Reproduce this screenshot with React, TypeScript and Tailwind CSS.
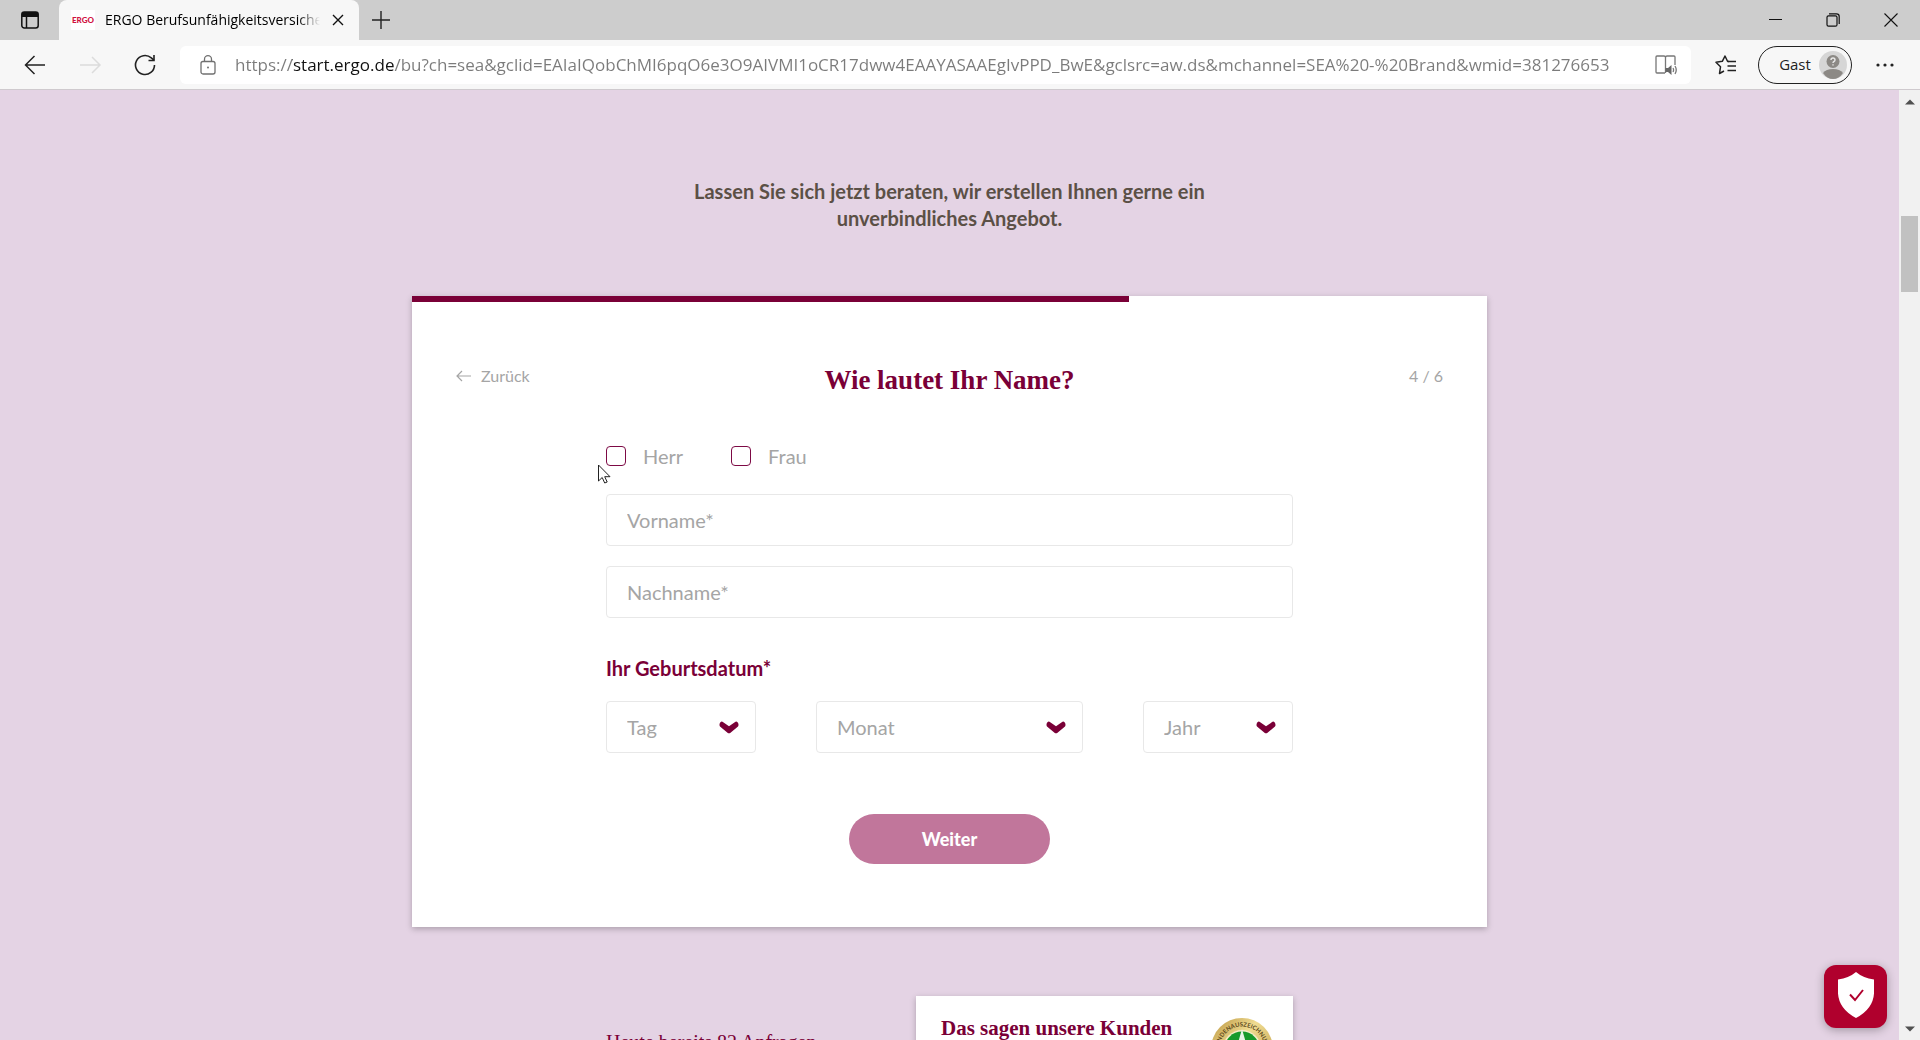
import { useState } from "react"
import type { ReactNode } from "react"

const URL =
  "https://start.ergo.de/bu?ch=sea&gclid=EAIaIQobChMI6pqO6e3O9AIVMI1oCR17dww4EAAYASAAEgIvPPD_BwE&gclsrc=aw.ds&mchannel=SEA%20-%20Brand&wmid=381276653"

const MONTHS = [
  "Januar", "Februar", "März", "April", "Mai", "Juni",
  "Juli", "August", "September", "Oktober", "November", "Dezember",
]
const DAYS = Array.from({ length: 31 }, (_, i) => String(i + 1))
const YEARS = Array.from({ length: 60 }, (_, i) => String(2003 - i))

function TabBar() {
  return (
    <div className="flex h-10 shrink-0 items-center bg-[#cdcdcd] text-black">
      <button aria-label="Tabaktionen" className="flex w-[59px] justify-center">
        <svg width="20" height="20" viewBox="0 0 20 20" fill="none" stroke="#111" strokeWidth="1.5">
          <rect x="1.8" y="2" width="16.4" height="16" rx="2.5" />
          <path d="M2 4.5h16" strokeWidth="5" />
          <path d="M6.5 7v11" />
        </svg>
      </button>
      <div className="flex h-full w-[300px] items-center rounded-t-lg bg-[#f7f7f7] pl-3 pr-[11px]">
        <span className="flex h-5 w-6 shrink-0 items-center justify-center bg-white font-['Lato',sans-serif] text-[8px] font-black text-[#d0103f]">
          ERGO
        </span>
        <span className="ml-[10px] flex-1 overflow-hidden whitespace-nowrap text-sm [mask-image:linear-gradient(to_right,black_90%,transparent)]">
          ERGO Berufsunfähigkeitsversicherung
        </span>
        <button aria-label="Tab schließen" className="ml-2 flex size-5 items-center justify-center">
          <svg width="12" height="12" viewBox="0 0 12 12" stroke="#111" strokeWidth="1.4">
            <path d="M1 1l10 10M11 1L1 11" />
          </svg>
        </button>
      </div>
      <button aria-label="Neuer Tab" className="ml-3 flex size-5 items-center justify-center">
        <svg width="18" height="18" viewBox="0 0 18 18" stroke="#222" strokeWidth="1.4">
          <path d="M9 0v18M0 9h18" />
        </svg>
      </button>
      <div className="ml-auto flex">
        <button aria-label="Minimieren" className="flex w-[58px] justify-center">
          <svg width="14" height="14" viewBox="0 0 14 14" stroke="#111">
            <path d="M1 6.5h13" />
          </svg>
        </button>
        <button aria-label="Verkleinern" className="flex w-[58px] justify-center">
          <svg width="14" height="14" viewBox="0 0 14 14" fill="none" stroke="#111" strokeWidth="1.2">
            <rect x="1" y="2.8" width="10" height="10.4" rx="1.5" />
            <path d="M3 .8h7.5a2.7 2.7 0 0 1 2.7 2.7V11" />
          </svg>
        </button>
        <button aria-label="Schließen" className="flex w-[58px] justify-center">
          <svg width="14" height="14" viewBox="0 0 14 14" stroke="#111" strokeWidth="1.1">
            <path d="M.5.5l13 13M13.5.5l-13 13" />
          </svg>
        </button>
      </div>
    </div>
  )
}

function Toolbar() {
  return (
    <div className="flex h-[50px] shrink-0 items-center border-b border-[#cfcace] bg-[#f7f7f7] pl-6">
      <button aria-label="Zurück" className="flex w-[22px] justify-center">
        <svg width="22" height="20" viewBox="0 0 22 20" fill="none" stroke="#222" strokeWidth="1.5">
          <path d="M21 10H2M10.5 1L1.5 10l9 9" />
        </svg>
      </button>
      <button aria-label="Vorwärts" disabled className="ml-[34px] flex w-[22px] justify-center">
        <svg width="22" height="20" viewBox="0 0 22 20" fill="none" stroke="#dcdcdc" strokeWidth="1.5">
          <path d="M0 10h20M12 2l8 8-8 8" />
        </svg>
      </button>
      <button aria-label="Aktualisieren" className="ml-8 flex w-[22px] justify-center">
        <svg width="22" height="22" viewBox="0 0 22 22" fill="none" stroke="#222" strokeWidth="1.6">
          <path d="M20.5 11a9.500 9.500 0 1 1-3.200-7.100L20 6.200" />
          <path d="M20 1v5.500h-5.500" />
        </svg>
      </button>
      <div className="ml-6 flex h-[38px] flex-1 items-center rounded-md bg-white pl-5 pr-[14px]">
        <svg width="16" height="20" viewBox="0 0 16 20" fill="none" stroke="#707070" strokeWidth="1.3" className="shrink-0">
          <rect x="1" y="6.5" width="14" height="12.5" rx="2" />
          <path d="M4.500 6.500V4.200a3.500 3.500 0 0 1 7 0v2.300" />
          <circle cx="8" cy="12.5" r="1" fill="#707070" stroke="none" />
        </svg>
        {/* the host part of the address is darker than the rest */}
        <input
          aria-label="Adresse"
          defaultValue={URL}
          className="ml-[19px] h-8 min-w-0 flex-1 bg-[linear-gradient(to_right,#7b7b7b_57px,#111_57px,#111_159px,#7b7b7b_159px)] bg-clip-text text-[17px] text-transparent outline-none"
        />
        <button aria-label="Plastischer Reader" className="ml-3">
          <svg width="22" height="20" viewBox="0 0 22 20" fill="none" stroke="#777" strokeWidth="1.3">
            <path d="M10 18H2a1 1 0 0 1-1-1V2a1 1 0 0 1 1-1h7a1.500 1.500 0 0 1 1.500 1.500V18M10.500 2.500A1.500 1.500 0 0 1 12 1h7a1 1 0 0 1 1 1v8" />
            <path d="M10.500 13H13l3.500-3v10L13 17h-2.500z" fill="#666" stroke="none" />
            <path d="M18 13q1.200 2 0 4M20 11q2.500 4 0 8" />
          </svg>
        </button>
      </div>
      <button aria-label="Favoriten" className="ml-6">
        <svg width="22" height="20" viewBox="0 0 22 20" fill="none" stroke="#222" strokeWidth="1.5" strokeLinejoin="round">
          <path d="M14 6.500l-1.500-.3L10 1 7.300 6.300 1 7.300l4.500 4.500L4.500 18.500 9 16" />
          <path d="M12.500 6.500H21M12.500 11H21M12.500 15.500H21" />
        </svg>
      </button>
      <button className="ml-[21px] flex h-[38px] items-center gap-1.5 rounded-full border border-[#222] pl-[18px] pr-1 text-[15px] text-[#222]">
        <span className="w-9">Gast</span>
        <svg width="28" height="28" viewBox="0 0 28 28">
          <circle cx="14" cy="14" r="14" fill="#d6d6d6" />
          <circle cx="14" cy="10.5" r="6.500" fill="#8c8985" />
          <path d="M4 22q3-4 10-4t10 4q-4 6-10 6t-10-6z" fill="#8c8985" />
          <path d="M12 9q0-2 2-2t2 2q0 1-1 1.500t-1 1.500M14 13.300v1.200" fill="none" stroke="#e8e8e8" strokeWidth="1.4" />
        </svg>
      </button>
      <button aria-label="Einstellungen und mehr" className="ml-6 mr-[26px]">
        <svg width="18" height="4" viewBox="0 0 18 4" fill="#222">
          <circle cx="2" cy="2" r="1.600" />
          <circle cx="9" cy="2" r="1.600" />
          <circle cx="16" cy="2" r="1.600" />
        </svg>
      </button>
    </div>
  )
}

function Scrollbar() {
  return (
    <div className="flex w-[21px] shrink-0 flex-col items-center bg-[#f1f1f1] pb-2 pt-[9px]">
      <svg width="10" height="6" viewBox="0 0 10 6" fill="#505050">
        <path d="M5 .5L10 5.500H0z" />
      </svg>
      <div className="mt-[111px] h-[76px] w-[17px] bg-[#c1c1c1]" />
      <svg width="10" height="6" viewBox="0 0 10 6" fill="#505050" className="mt-auto">
        <path d="M0 .5h10l-5 5z" />
      </svg>
    </div>
  )
}

function SalutationBox({ label }: { label: string }) {
  return (
    <label className="flex items-center gap-[17px]">
      <input
        type="checkbox"
        className="size-5 appearance-none rounded border border-[#7d0a45] bg-white checked:bg-[#7a0037]"
      />
      {label}
    </label>
  )
}

function DateSelect({ label, options, className }: { label: string; options: string[]; className: string }) {
  return (
    <div className={`relative ${className}`}>
      <select
        aria-label={label}
        defaultValue=""
        className="h-[52px] w-full appearance-none rounded border border-[#e8e8e8] bg-white px-5 text-xl text-[#a5a5a5] outline-none"
      >
        <option value="">{label}</option>
        {options.map((o) => (
          <option key={o}>{o}</option>
        ))}
      </select>
      <svg width="20" height="13" viewBox="0 0 20 13" fill="#7a0037" className="pointer-events-none absolute right-[17px] top-5">
        <path d="M.6 4.800Q0 2 2.500 .6L3.500 .8 10 5.300 16.500 .8 17.500 .6Q20 2 19.400 4.800L19 5.500 11.500 11.700Q10 13 8.500 11.700L1 5.500z" />
      </svg>
    </div>
  )
}

function Field({ children }: { children: ReactNode }) {
  return <div className="h-[52px] w-full">{children}</div>
}

const fieldClass =
  "h-full w-full rounded border border-[#e8e8e8] px-5 text-xl text-[#444] outline-none placeholder:text-[#a5a5a5]"

function NameForm() {
  const [firstName, setFirstName] = useState("")
  const [lastName, setLastName] = useState("")

  return (
    <section className="w-full max-w-[1075px] bg-white pb-[63px] shadow-[0_2px_6px_rgba(0,0,0,0.25)]">
      <div className="h-1.5">
        <div className="h-full w-2/3 bg-[#7a0037]" />
      </div>
      <div className="mt-[62px] grid grid-cols-[1fr_auto_1fr] px-11 text-base text-[#a5a5a5]">
        <button className="flex h-6 items-center gap-2.5 justify-self-start">
          <svg width="15" height="12" viewBox="0 0 15 12" fill="none" stroke="#a5a5a5" strokeWidth="1.2">
            <path d="M15 6H1M6 1L1 6l5 5" />
          </svg>
          Zurück
        </button>
        <h1 className="font-['Liberation_Serif',serif] text-[27px] font-bold leading-8 text-[#7a0037]">
          Wie lautet Ihr Name?
        </h1>
        <span className="h-6 justify-self-end">4 / 6</span>
      </div>
      <form className="mx-auto mt-[46px] max-w-[687px]" onSubmit={(e) => e.preventDefault()}>
        <div className="relative flex h-7 items-center gap-12 text-xl text-[#a5a5a5]">
          <SalutationBox label="Herr" />
          <SalutationBox label="Frau" />
          {/* mouse pointer */}
          <svg width="13" height="20" viewBox="0 0 13 20" fill="#fff" stroke="#222" className="pointer-events-none absolute -left-2 top-[22px]">
            <path d="M.5 1v16l3.700-3.500 2.500 5.500 2.500-1-2.500-5.300h5.300z" />
          </svg>
        </div>
        <div className="mt-6 flex flex-col gap-5">
          <Field>
            <input aria-label="Vorname" placeholder="Vorname*" value={firstName} onChange={(e) => setFirstName(e.target.value)} className={fieldClass} />
          </Field>
          <Field>
            <input aria-label="Nachname" placeholder="Nachname*" value={lastName} onChange={(e) => setLastName(e.target.value)} className={fieldClass} />
          </Field>
        </div>
        <fieldset className="mt-9">
          <legend className="text-xl font-bold text-[#7a0037]">Ihr Geburtsdatum*</legend>
          <div className="mt-[19px] flex gap-[60px]">
            <DateSelect label="Tag" options={DAYS} className="w-[150px]" />
            <DateSelect label="Monat" options={MONTHS} className="flex-1" />
            <DateSelect label="Jahr" options={YEARS} className="w-[150px]" />
          </div>
        </fieldset>
        <button type="submit" className="mx-auto mt-[61px] block h-[50px] w-[201px] rounded-full bg-[#c1769b] text-lg font-black text-white">
          Weiter
        </button>
      </form>
    </section>
  )
}

function Seal() {
  return (
    <svg width="62" height="62" viewBox="0 0 62 62" role="img" aria-label="Kundenauszeichnung">
      <defs>
        <linearGradient id="gold" x1="0" y1="0" x2="1" y2="1">
          <stop offset="0" stopColor="#b8923c" />
          <stop offset="0.4" stopColor="#f0dc92" />
          <stop offset="1" stopColor="#b8923c" />
        </linearGradient>
        <path id="ring" d="M8.500 31a22.500 22.500 0 0 1 45 0" />
      </defs>
      <circle cx="31" cy="31" r="31" fill="url(#gold)" />
      <circle cx="31" cy="31" r="19" fill="#f4ecc8" />
      <circle cx="31" cy="31" r="17.500" fill="#169a2c" />
      <path d="M31 11l4 14 13 6-13 5-4 14-4-14-13-5 13-6z" fill="#e8f4e8" />
      <text fontFamily="Lato, sans-serif" fontSize="6" fontWeight="700" fill="#5d4a1c" textAnchor="middle">
        <textPath href="#ring" startOffset="50%">KUNDENAUSZEICHNUNG</textPath>
      </text>
    </svg>
  )
}

export default function App() {
  return (
    <div className="flex h-screen flex-col overflow-hidden font-['Open_Sans','Noto_Sans',sans-serif]">
      <TabBar />
      <Toolbar />
      <div className="flex min-h-0 flex-1">
        <main className="flex min-w-0 flex-1 flex-col items-center overflow-hidden bg-[#e4d3e4] font-['Lato',sans-serif]">
          <p className="mt-[88px] max-w-[560px] shrink-0 text-center text-xl font-bold leading-[27px] text-[#5b5046]">
            Lassen Sie sich jetzt beraten, wir erstellen Ihnen gerne ein unverbindliches Angebot.
          </p>
          <div className="mt-16 flex w-full shrink-0 justify-center">
            <NameForm />
          </div>
          <div className="mt-[69px] flex w-full max-w-[687px] shrink-0 justify-between font-['Liberation_Serif',serif] text-[#7a0037]">
            <p className="mt-8 text-xl leading-7">Heute bereits 82 Anfragen</p>
            <div className="flex h-40 w-[377px] justify-between bg-white pl-[25px] pr-5 pt-[18px] shadow-[0_2px_6px_rgba(0,0,0,0.25)]">
              <h2 className="text-[21px] font-bold leading-7">Das sagen unsere Kunden</h2>
              <div className="pt-1">
                <Seal />
              </div>
            </div>
          </div>
        </main>
        <Scrollbar />
      </div>
      <button
        aria-label="Datenschutz-Einstellungen"
        className="fixed bottom-3 right-[33px] flex size-[63px] items-center justify-center rounded-xl bg-[#b0002d] shadow-[0_2px_10px_rgba(0,0,0,0.3)]"
      >
        <svg width="36" height="46" viewBox="0 0 36 46" className="mb-1">
          <path d="M18 0q7 6 18 7.500v14Q35 37 18 46 1 37 0 21.500v-14Q11 6 18 0z" fill="#fff" />
          <path d="M12 22.500l5 5.500 8-10" fill="none" stroke="#b0002d" strokeWidth="2" />
        </svg>
      </button>
    </div>
  )
}
